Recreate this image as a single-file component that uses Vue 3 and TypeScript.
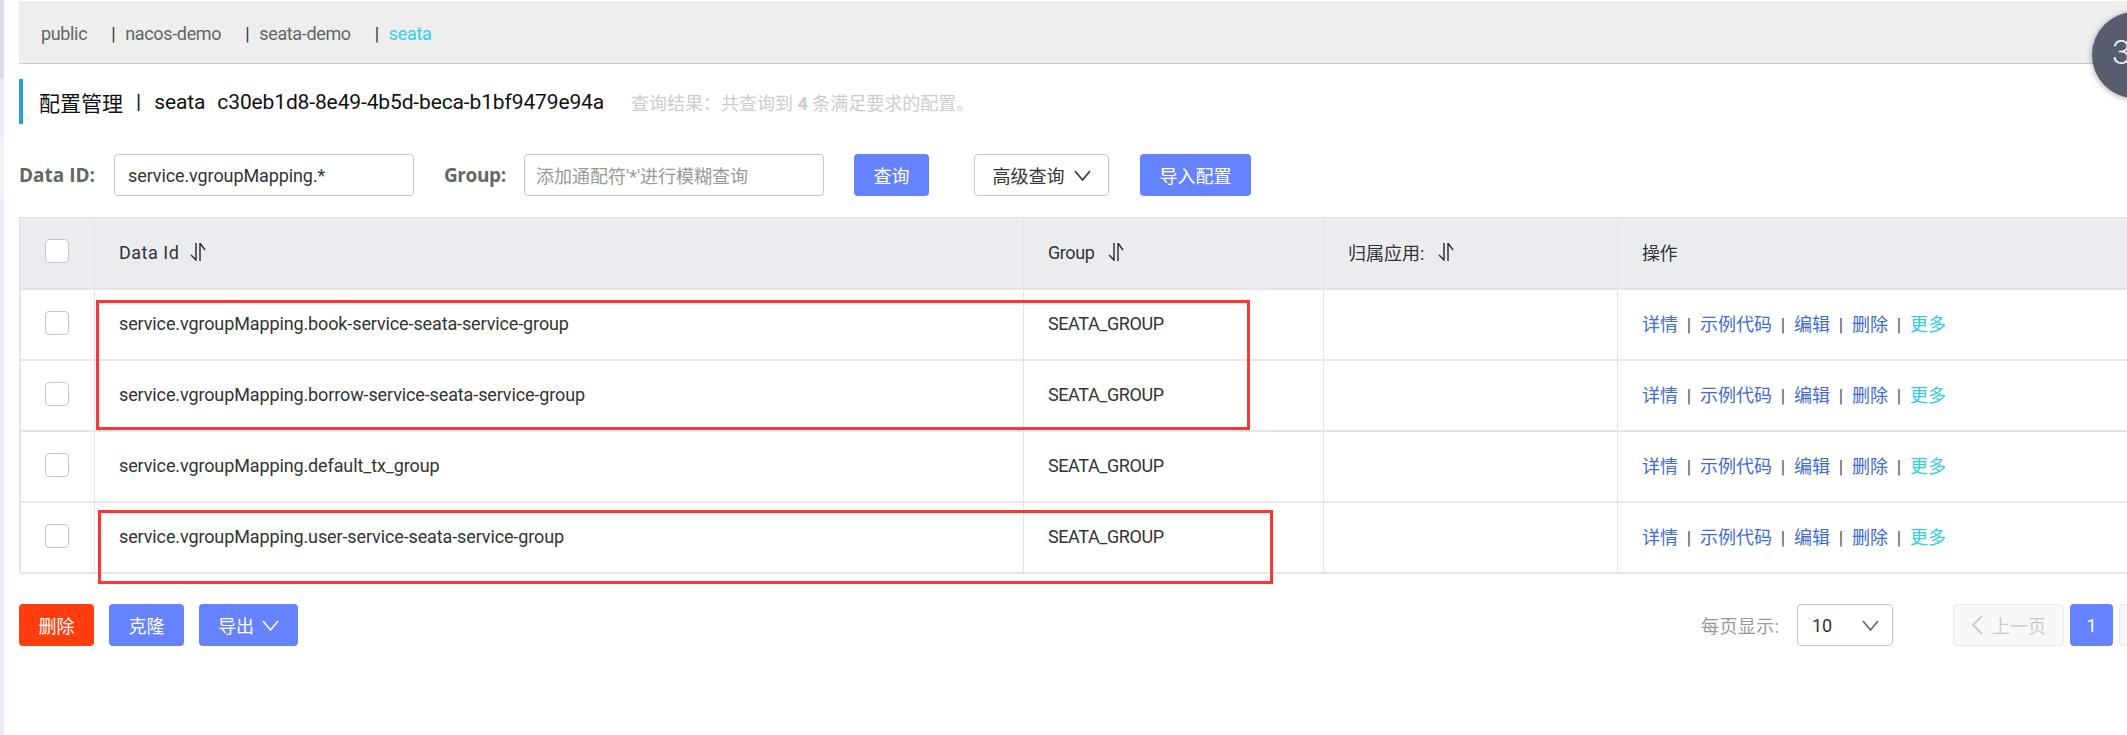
<template>
  <div class="page">
    <div class="gutter">
      <i class="g1"></i><i class="g2"></i><i class="g3"></i><i class="g4"></i>
    </div>
    <div class="main">
      <div class="ns-bar">
        <template v-for="(ns, i) in namespaces" :key="ns">
          <span v-if="i > 0" class="ns-sep">|</span>
          <span class="ns-item" :class="{ active: i === namespaces.length - 1 }">{{ ns }}</span>
        </template>
      </div>

      <div class="title-row">
        <span class="title">配置管理</span>
        <span class="title-sep">|</span>
        <span class="title-en">seata</span>
        <span class="title-en uuid">c30eb1d8-8e49-4b5d-beca-b1bf9479e94a</span>
        <span class="result">查询结果：共查询到 <b>4</b> 条满足要求的配置。</span>
      </div>

      <div class="search-row">
        <label class="lbl lbl-id">Data ID:</label>
        <div class="input">service.vgroupMapping.*</div>
        <label class="lbl lbl-group">Group:</label>
        <div class="input placeholder">添加通配符'*'进行模糊查询</div>
        <button class="btn primary btn-query">查询</button>
        <button class="btn normal btn-adv">
          高级查询
          <svg class="chev" viewBox="0 0 17 11"><path d="M1 1l7.5 9L16 1" /></svg>
        </button>
        <button class="btn primary btn-import">导入配置</button>
      </div>

      <div class="table-wrap">
        <table class="cfg-table">
          <colgroup>
            <col class="c-check" />
            <col class="c-id" />
            <col class="c-group" />
            <col class="c-app" />
            <col />
          </colgroup>
          <thead>
            <tr>
              <th><span class="checkbox"></span></th>
              <th v-for="h in sortHeads" :key="h">
                <span class="th-in">
                  {{ h }}
                  <svg class="sort" viewBox="0 0 16 18"><path d="M1 12l5 5V0M10 18V0l5 7" /></svg>
                </span>
              </th>
              <th>操作</th>
            </tr>
          </thead>
          <tbody>
            <tr v-for="row in rows" :key="row">
              <td><span class="checkbox"></span></td>
              <td class="data-id">{{ row }}</td>
              <td>SEATA_GROUP</td>
              <td></td>
              <td class="ops">
                <template v-for="(op, i) in ops" :key="op">
                  <a class="op">{{ op }}</a><span class="op-sep">|</span>
                  <a v-if="i === ops.length - 1" class="op more">更多</a>
                </template>
              </td>
            </tr>
          </tbody>
        </table>
        <div class="mark mark-a"></div>
        <div class="mark mark-b"></div>
      </div>

      <div class="footer">
        <button class="btn danger">删除</button>
        <button class="btn primary">克隆</button>
        <button class="btn primary btn-export">
          导出
          <svg class="chev" viewBox="0 0 17 11"><path d="M1 1l7.5 9L16 1" /></svg>
        </button>
        <div class="pager">
          <span class="size-lbl">每页显示:</span>
          <div class="select">
            <span>10</span>
            <svg class="chev" viewBox="0 0 17 11"><path d="M1 1l7.5 9L16 1" /></svg>
          </div>
          <button class="page-btn disabled prev">
            <svg class="prev-ico" viewBox="0 0 12 20"><path d="M11 1L2 10l9 9" /></svg>
            上一页
          </button>
          <button class="page-btn current">1</button>
          <button class="page-btn disabled next">下一页</button>
        </div>
      </div>
    </div>
    <div class="float-count">3</div>
  </div>
</template>

<script setup lang="ts">
const namespaces: string[] = ['public', 'nacos-demo', 'seata-demo', 'seata']
const sortHeads: string[] = ['Data Id', 'Group', '归属应用:']
const ops: string[] = ['详情', '示例代码', '编辑', '删除']
const rows: string[] = [
  'service.vgroupMapping.book-service-seata-service-group',
  'service.vgroupMapping.borrow-service-seata-service-group',
  'service.vgroupMapping.default_tx_group',
  'service.vgroupMapping.user-service-seata-service-group'
]
</script>

<style>
html,
body {
  margin: 0;
  overflow: hidden;
  background: #fff;
}
</style>

<style scoped>
.page {
  position: relative;
  display: flex;
  width: 2127px;
  height: 735px;
  overflow: hidden;
  background: #fff;
  font-family: Roboto, "Noto Sans CJK SC", sans-serif;
  font-size: 18px;
  color: #333;
}

.gutter {
  display: flex;
  flex-direction: column;
  flex: none;
  width: 4px;
  height: 100%;
}
.gutter i { display: block; }
.g1 { height: 78px; background: #d8dde6; }
.g2 { height: 60px; background: #e9ecf3; }
.g3 { height: 60px; background: #f0f2f7; }
.g4 { flex: 1; background: #e9ecf3; }

.main {
  flex: none;
  width: 2211px;
  margin-left: 15px;
  padding-top: 1px;
}

.ns-bar {
  display: flex;
  align-items: center;
  box-sizing: border-box;
  height: 63px;
  padding: 2px 0 0 22px;
  background: #eee;
  border-bottom: 1px solid #ccc;
  color: #666;
  letter-spacing: -0.35px;
}
.ns-sep {
  margin: 0 10px 0 24px;
  color: #333;
}
.ns-item.active { color: #33cde5; }

.title-row {
  display: flex;
  align-items: center;
  height: 45px;
  margin-top: 15px;
  padding-left: 16px;
  border-left: 4px solid #2a9fd6;
  color: #111;
}
.title { font-size: 21px; }
.title-sep { margin: 0 13px 0 13px; font-size: 21px; }
.title-en { font-size: 21px; letter-spacing: -0.1px; }
.uuid { margin-left: 12px; letter-spacing: -0.13px; }
.result {
  margin-left: 27px;
  color: #ccc;
  font-size: 18px;
}
.result b { font-weight: 700; }

.search-row {
  display: flex;
  align-items: center;
  height: 42px;
  margin-top: 30px;
}
.lbl {
  font-family: "Open Sans", "Noto Sans CJK SC", sans-serif;
  font-size: 19px;
  font-weight: 700;
  color: #666;
}
.lbl-id { width: 95px; }
.lbl-group { width: 80px; margin-left: 30px; letter-spacing: -0.4px; }
.input {
  display: flex;
  align-items: center;
  box-sizing: border-box;
  width: 300px;
  height: 42px;
  padding-left: 13px;
  border: 1px solid #c4c6cf;
  border-radius: 4px;
  color: #333;
  letter-spacing: -0.1px;
}
.placeholder { color: #999; letter-spacing: 0; padding-left: 11px; }

.btn {
  display: inline-flex;
  align-items: center;
  justify-content: center;
  box-sizing: border-box;
  width: 75px;
  height: 42px;
  padding: 0;
  border: 1px solid transparent;
  border-radius: 4px;
  font-family: inherit;
  font-size: 18px;
}
.primary { background: #6582ff; color: #fff; }
.danger { background: #ff3d0e; color: #fff; }
.normal { background: #fff; border-color: #c4c6cf; color: #333; }
.btn-query { margin-left: 30px; }
.btn-adv { width: 135px; margin-left: 45px; gap: 9px; }
.btn-import { width: 111px; margin-left: 31px; }

.chev {
  flex: none;
  width: 17px;
  height: 11px;
  fill: none;
  stroke: currentColor;
  stroke-width: 1.6;
}

.table-wrap {
  position: relative;
  margin-top: 21px;
}
.cfg-table {
  width: 100%;
  table-layout: fixed;
  border-collapse: separate;
  border-spacing: 0;
  border-top: 1px solid #dcdee3;
  border-left: 2px solid #e3e4e9;
}
.c-check { width: 74px; }
.c-id { width: 929px; }
.c-group { width: 300px; }
.c-app { width: 294px; }
.cfg-table th,
.cfg-table td {
  box-sizing: border-box;
  height: 71px;
  padding: 0 0 2px 24px;
  border-right: 1px solid #e3e4e9;
  border-bottom: 2px solid #e5e6eb;
  font-weight: 400;
  text-align: left;
  letter-spacing: -0.42px;
}
.cfg-table th {
  height: 72px;
  background: #ebecf0;
}
.cfg-table th:nth-child(2) { letter-spacing: 0.5px; }
.cfg-table th:nth-child(2) .th-in { gap: 11px; }
.cfg-table th:nth-child(4) { letter-spacing: 0; }
.cfg-table th:last-child,
.cfg-table td:last-child { border-right: none; }
.cfg-table td.data-id { letter-spacing: -0.12px; }
.cfg-table td.ops { padding-bottom: 4px; letter-spacing: 0; }

.checkbox {
  display: block;
  box-sizing: border-box;
  width: 24px;
  height: 24px;
  margin-bottom: 2px;
  background: #fff;
  border: 1px solid #c4c6cf;
  border-radius: 4px;
}
.th-in {
  display: inline-flex;
  align-items: center;
  gap: 14px;
}
.sort {
  width: 16px;
  height: 18px;
  fill: none;
  stroke: #333;
  stroke-width: 1.5;
}

.op { color: #3f6ad8; letter-spacing: 0; }
.op.more { color: #33cde5; }
.op-sep {
  margin: 0 8.8px;
  color: #555;
  letter-spacing: 0;
}

.mark {
  position: absolute;
  box-sizing: border-box;
  border: 3px solid #fa3636;
}
.mark-a { left: 77px; top: 83px; width: 1154px; height: 130px; }
.mark-b { left: 79px; top: 293px; width: 1175px; height: 74px; }

.footer {
  display: flex;
  align-items: center;
  gap: 15px;
  height: 42px;
  margin-top: 30px;
}
.btn-export { width: 99px; gap: 8px; }
.pager {
  display: flex;
  align-items: center;
  margin-left: auto;
  color: #999;
}
.size-lbl { width: 96px; margin-left: 1px; letter-spacing: 0.4px; }
.select {
  display: flex;
  align-items: center;
  justify-content: space-between;
  box-sizing: border-box;
  width: 96px;
  height: 42px;
  padding: 0 13px 0 14px;
  border: 1px solid #c4c6cf;
  border-radius: 4px;
  color: #333;
}
.select .chev { stroke: #666; }
.page-btn {
  display: inline-flex;
  align-items: center;
  justify-content: center;
  box-sizing: border-box;
  height: 42px;
  padding: 0;
  border: 1px solid transparent;
  border-radius: 4px;
  font-family: inherit;
  font-size: 18px;
}
.disabled {
  width: 111px;
  background: #f7f8fa;
  border-color: #e6e7eb;
  color: #ccc;
}
.prev { margin-left: 60px; gap: 9px; }
.prev-ico {
  width: 12px;
  height: 20px;
  fill: none;
  stroke: #ccc;
  stroke-width: 1.8;
}
.current {
  width: 43px;
  margin: 0 6px;
  background: #6582ff;
  color: #fff;
}

.float-count {
  position: absolute;
  top: 12px;
  left: 2092px;
  box-sizing: border-box;
  width: 86px;
  height: 86px;
  padding-left: 20px;
  border-radius: 50%;
  background: #565d6d;
  box-shadow: 0 1px 6px rgba(0, 0, 0, 0.35);
  color: #eee;
  font-size: 34px;
  font-weight: 300;
  line-height: 80px;
}
</style>
